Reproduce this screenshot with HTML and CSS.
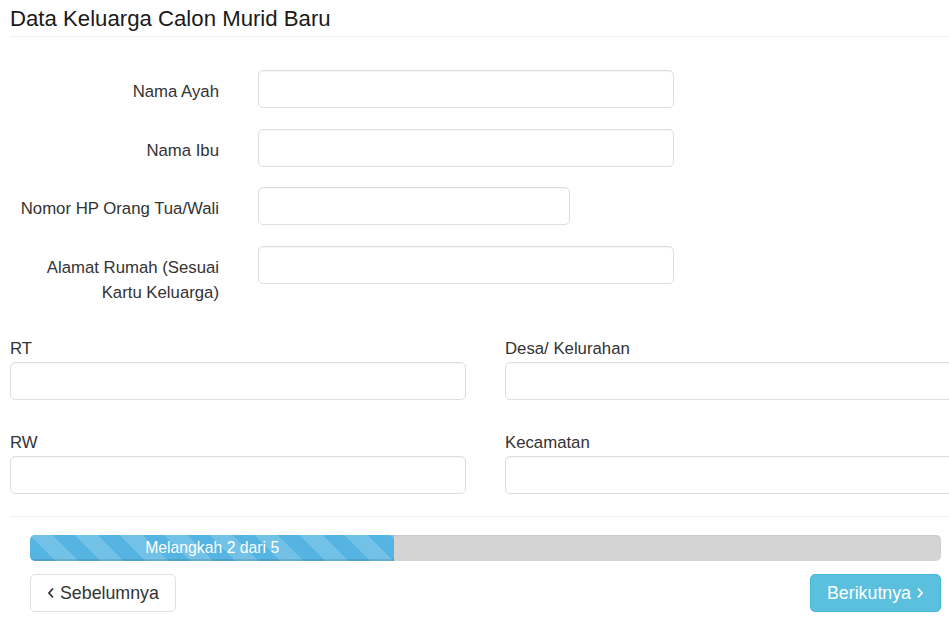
FILE: index.html
```html
<!DOCTYPE html>
<html lang="id">
<head>
  <meta charset="UTF-8">
  <meta name="viewport" content="width=device-width, initial-scale=1.0">
  <title>Data Keluarga Calon Murid Baru</title>
  <link rel="stylesheet" href="styles.css">
</head>
<body>

  <div class="page">
    <h3 class="page-title">Data Keluarga Calon Murid Baru</h3>

    <!-- Data orang tua -->
    <form class="family-form">
      <div class="form-row">
        <label class="row-label" for="namaAyah">Nama Ayah</label>
        <input type="text" id="namaAyah" class="field field-wide" />
      </div>
      <div class="form-row">
        <label class="row-label" for="namaIbu">Nama Ibu</label>
        <input type="text" id="namaIbu" class="field field-wide" />
      </div>
      <div class="form-row">
        <label class="row-label" for="nomorHp">Nomor HP Orang Tua/Wali</label>
        <input type="text" id="nomorHp" class="field field-short" />
      </div>
      <div class="form-row">
        <label class="row-label" for="alamat">Alamat Rumah (Sesuai Kartu Keluarga)</label>
        <input type="text" id="alamat" class="field field-wide" />
      </div>

      <!-- Alamat detail, dua kolom -->
      <div class="address-grid">
        <div class="address-group">
          <label for="rt">RT</label>
          <input type="text" id="rt" class="field" />
        </div>
        <div class="address-group">
          <label for="desa">Desa/ Kelurahan</label>
          <input type="text" id="desa" class="field" />
        </div>
        <div class="address-group">
          <label for="rw">RW</label>
          <input type="text" id="rw" class="field" />
        </div>
        <div class="address-group">
          <label for="kecamatan">Kecamatan</label>
          <input type="text" id="kecamatan" class="field" />
        </div>
      </div>
    </form>

    <div class="wizard-footer">
      <div class="progress">
        <div class="progress-bar" style="width: 40%">Melangkah 2 dari 5</div>
      </div>

      <div class="wizard-buttons">
        <button type="button" class="btn btn-default">
          <svg class="chevron" width="8" height="12" viewBox="0 0 8 12"><polyline points="6,1.5 2,6 6,10.5" /></svg>
          Sebelumnya
        </button>
        <button type="button" class="btn btn-info">
          Berikutnya
          <svg class="chevron" width="8" height="12" viewBox="0 0 8 12"><polyline points="2,1.5 6,6 2,10.5" /></svg>
        </button>
      </div>
    </div>
  </div>

</body>
</html>
```

FILE: styles.css
```css
:root {
  --text: #333;
  --line: #eee;
  --field-border: #dedede;
  --info: #5bc0de;
  --info-border: #46b8da;
  --bar: #56b4e2;
  --track: #d4d4d4;
}

html, body {
  overflow: hidden;
}

body {
  margin: 0;
  font-family: "Liberation Sans", Arial, sans-serif;
  color: var(--text);
  background: #fff;
}

.page {
  width: 951px;
  padding-left: 10px;
}

.page-title {
  margin: 0;
  padding: 6px 0 4px;
  font-size: 22.2px;
  line-height: 26px;
  font-weight: normal;
  color: #1a1a1a;
  border-bottom: 1px solid var(--line);
}

.family-form {
  padding-top: 33px;
}

.form-row {
  display: grid;
  grid-template-columns: 209px auto;
  column-gap: 39px;
  align-items: start;
  margin-bottom: 20.5px;
}

.row-label {
  text-align: right;
  padding-top: 9px;
  font-size: 16.75px;
  line-height: 25.5px;
}

.field {
  display: block;
  box-sizing: border-box;
  width: 100%;
  height: 38px;
  padding: 6px 12px;
  font-size: 16px;
  border: 1px solid var(--field-border);
  border-radius: 5px;
  box-shadow: inset 0 1px 1px rgba(0, 0, 0, 0.04);
  background: #fff;
}

.field-wide {
  width: 416px;
}

.field-short {
  width: 312px;
}

.address-grid {
  display: grid;
  grid-template-columns: 456px 456px;
  column-gap: 39px;
  row-gap: 30px;
  margin-top: 30.5px;
}

.address-group label {
  display: block;
  font-size: 16.75px;
  line-height: 25px;
  margin-bottom: 1px;
}

.wizard-footer {
  margin-top: 22px;
  padding: 18px 20px 0;
  border-top: 1px solid var(--line);
}

.progress {
  height: 26px;
  background: var(--track);
  border-radius: 5px;
  overflow: hidden;
  box-shadow: inset 0 1px 2px rgba(0, 0, 0, 0.06);
}

.progress-bar {
  height: 100%;
  background-color: var(--bar);
  background-image: linear-gradient(45deg, rgba(255, 255, 255, 0.17) 25%, transparent 25%, transparent 50%, rgba(255, 255, 255, 0.17) 50%, rgba(255, 255, 255, 0.17) 75%, transparent 75%, transparent);
  background-size: 45px 45px;
  box-shadow: inset 0 -2px 0 rgba(0, 0, 0, 0.1);
  color: #fff;
  font-size: 15.75px;
  line-height: 26px;
  text-align: center;
}

.wizard-buttons {
  display: flex;
  justify-content: space-between;
  margin-top: 13px;
}

.btn {
  display: inline-flex;
  align-items: center;
  gap: 5px;
  height: 38px;
  padding: 0 16px;
  font-family: inherit;
  font-size: 17.8px;
  border-radius: 5px;
  cursor: pointer;
}

.btn-default {
  background: #fff;
  color: var(--text);
  border: 1px solid #e0e0e0;
}

.btn-info {
  background: var(--info);
  color: #fff;
  border: 1px solid var(--info-border);
}

.chevron polyline {
  fill: none;
  stroke: currentColor;
  stroke-width: 1.8;
}
```
